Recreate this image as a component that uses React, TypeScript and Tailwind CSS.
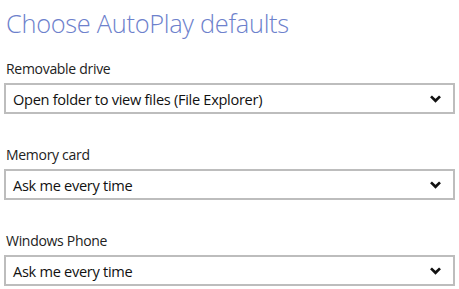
import React from "react";

const sections = [
  { label: "Removable drive", value: "Open folder to view files (File Explorer)" },
  { label: "Memory card", value: "Ask me every time" },
  { label: "Windows Phone", value: "Ask me every time" },
];

function Chevron() {
  return (
    <svg width="11" height="8" viewBox="0 0 11 8" className="shrink-0">
      <path d="M1 1.4 L5.5 5.8 L10 1.4" fill="none" stroke="#111" strokeWidth="2.7" strokeLinecap="butt" strokeLinejoin="miter" />
    </svg>
  );
}

export default function App() {
  return (
    <div
      className="w-[459px] h-[289px] bg-white overflow-hidden px-[4px]"
      style={{ fontFamily: '"Open Sans", "Noto Sans", sans-serif' }}
    >
      <h1 className="mt-[7px] ml-[2px] text-[25.4px] leading-[32px] font-light text-[#6d81cc] tracking-[-0.3px]">
        Choose AutoPlay defaults
      </h1>
      <div className="mt-[20px] flex flex-col gap-[31px]">
        {sections.map((s) => (
          <div key={s.label} className="flex flex-col">
            <div className="h-[20px] mb-[4px] ml-[2px] text-[14px] leading-[20px] text-[#222] tracking-[-0.3px]">
              {s.label}
            </div>
            <div className="h-[31px] border-2 border-[#bdbdbd] flex items-center justify-between pl-[7px] pr-[12px]">
              <span className="text-[14.6px] leading-[20px] text-[#111] tracking-[-0.3px]">{s.value}</span>
              <Chevron />
            </div>
          </div>
        ))}
      </div>
    </div>
  );
}
